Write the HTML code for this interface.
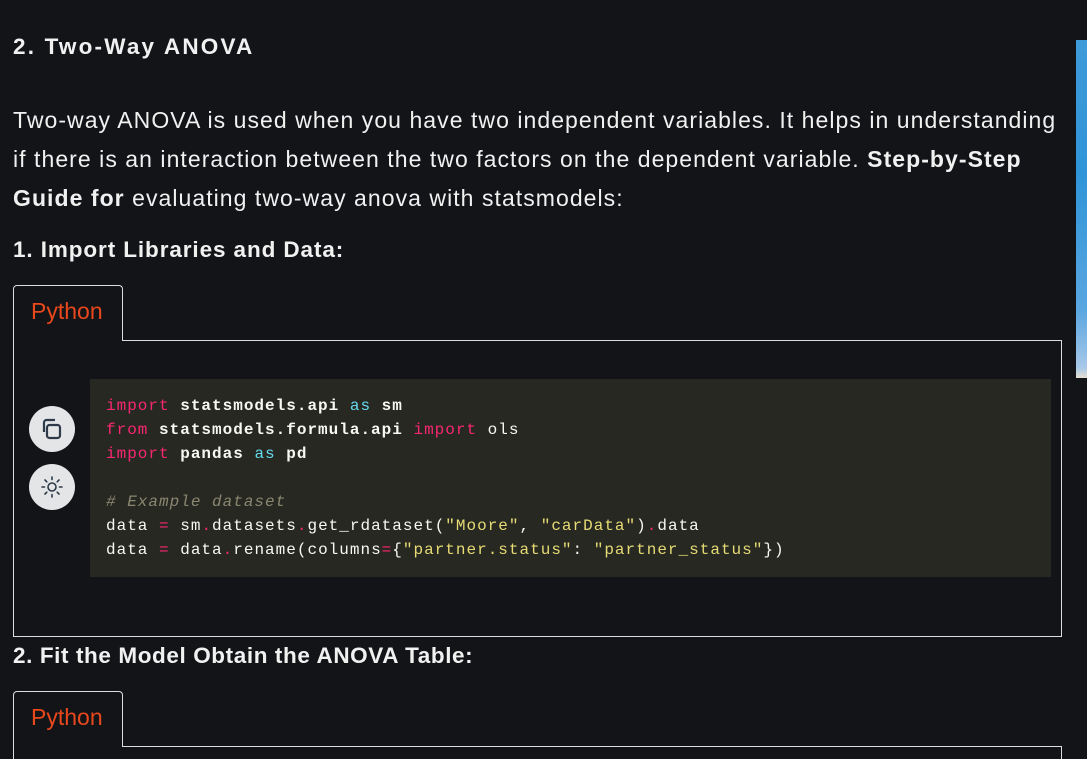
<!DOCTYPE html>
<html><head><meta charset="utf-8"><style>
html,body{margin:0;height:759px;overflow:hidden}
body{background:#131417;width:1087px;font-family:"Liberation Sans",sans-serif;color:#f1f1f1;position:relative}
h2{position:absolute;left:13px;margin:0;font-size:22.5px;letter-spacing:0.9px;font-weight:bold;white-space:nowrap}
p{position:absolute;left:13px;top:101px;margin:0;font-size:23px;letter-spacing:1.05px;line-height:39px;width:1062px}
.tab{position:absolute;left:13px;width:110px;height:56px;border:1px solid #ddd;border-bottom:none;border-radius:4px 4px 0 0;background:#131417;color:#e8481c;font-size:23px;box-sizing:border-box;padding:12px 0 0 17px;z-index:2}
.box{position:absolute;left:13px;width:1049px;border:1px solid #ddd;box-sizing:border-box}
.code{position:absolute;left:90px;top:379px;width:961px;height:198px;background:#272822;font-family:"Liberation Mono",monospace;font-size:16px;letter-spacing:1px;line-height:24px;color:#f8f8f2;padding:15px 0 0 16px;box-sizing:border-box;white-space:pre}
.k{color:#f92672}.b{color:#66d9ef}.s{color:#e6db74}.c{color:#8a8670;font-style:italic}.w{font-weight:bold}
.btn{position:absolute;left:29px;width:46px;height:46px;border-radius:50%;background:#e4e5e7}
.img{position:absolute;left:1076px;top:40px;width:11px;height:338px;background:linear-gradient(#3f9ad9,#2f95d8 40%,#5aa6e0 80%,#a8c8e8 97%,#e8e0d0)}
</style></head><body>
<h2 style="top:34px;letter-spacing:2.2px">2. Two-Way ANOVA</h2>
<p>Two-way ANOVA is used when you have two independent variables. It helps in understanding if there is an interaction between the two factors on the dependent variable. <b>Step-by-Step Guide for</b> evaluating two-way anova with statsmodels:</p>
<h2 style="top:237px">1. Import Libraries and Data:</h2>
<div class="tab" style="top:285px">Python</div>
<div class="box" style="top:340px;height:297px"></div>
<div class="code"><span class="k">import</span> <span class="w">statsmodels.api</span> <span class="b">as</span> <span class="w">sm</span>
<span class="k">from</span> <span class="w">statsmodels.formula.api</span> <span class="k">import</span> ols
<span class="k">import</span> <span class="w">pandas</span> <span class="b">as</span> <span class="w">pd</span>

<span class="c"># Example dataset</span>
data <span class="k">=</span> sm<span class="k">.</span>datasets<span class="k">.</span>get_rdataset(<span class="s">"Moore"</span>, <span class="s">"carData"</span>)<span class="k">.</span>data
data <span class="k">=</span> data<span class="k">.</span>rename(columns<span class="k">=</span>{<span class="s">"partner.status"</span>: <span class="s">"partner_status"</span>})</div>
<div class="btn" style="top:406px"><svg width="46" height="46" viewBox="0 0 46 46" fill="none" stroke="#2e3a4a" stroke-width="2.2"><rect x="18" y="19" width="13" height="13" rx="2.5"/><path d="M15 26V16.5a2.5 2.5 0 0 1 2.5-2.5H26"/></svg></div>
<div class="btn" style="top:464px"><svg width="46" height="46" viewBox="0 0 46 46" fill="none" stroke="#2e3a4a" stroke-width="1.6" stroke-linecap="round"><circle cx="23" cy="23" r="4"/><path d="M23 13v2.5M23 30.5V33M13 23h2.5M30.5 23H33M16 16l1.8 1.8M28.2 28.2L30 30M16 30l1.8-1.8M28.2 17.8L30 16"/></svg></div>
<h2 style="top:643px;letter-spacing:0.6px">2. Fit the Model Obtain the ANOVA Table:</h2>
<div class="tab" style="top:691px">Python</div>
<div class="box" style="top:746px;height:13px;border-bottom:none"></div>
<div class="img"></div>
</body></html>
